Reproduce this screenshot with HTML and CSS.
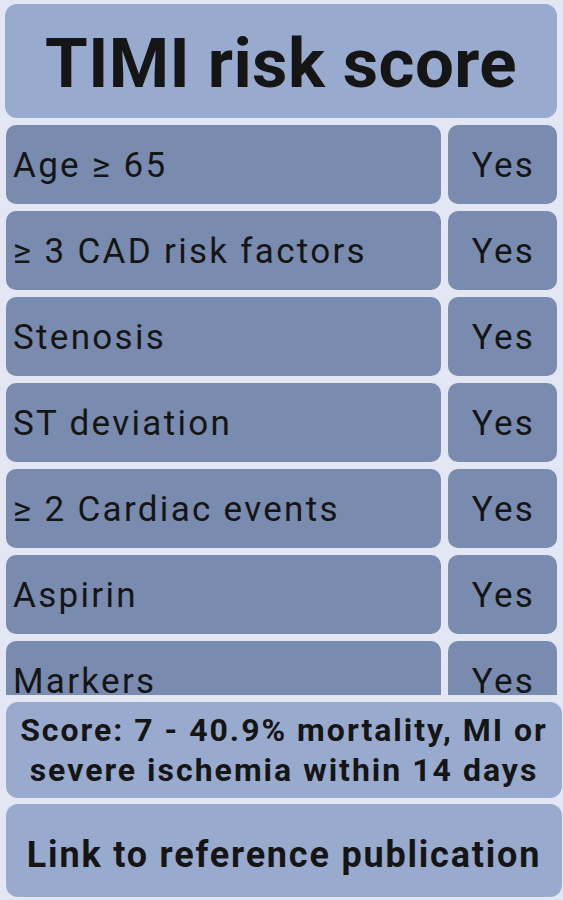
FILE: index.html
```html
<!DOCTYPE html>
<html>
<head>
<meta charset="utf-8">
<link rel="stylesheet" href="styles.css">
</head>
<body>
<div class="app">
  <div class="title">TIMI risk score</div>
  <div class="list">
    <div class="row"><div class="label">Age ≥ 65</div><div class="value">Yes</div></div>
    <div class="row"><div class="label">≥ 3 CAD risk factors</div><div class="value">Yes</div></div>
    <div class="row"><div class="label">Stenosis</div><div class="value">Yes</div></div>
    <div class="row"><div class="label">ST deviation</div><div class="value">Yes</div></div>
    <div class="row"><div class="label">≥ 2 Cardiac events</div><div class="value">Yes</div></div>
    <div class="row"><div class="label">Aspirin</div><div class="value">Yes</div></div>
    <div class="row"><div class="label">Markers</div><div class="value">Yes</div></div>
  </div>
  <div class="score">Score: 7 - 40.9% mortality, MI or<br>severe ischemia within 14 days</div>
  <div class="link">Link to reference publication</div>
</div>
</body>
</html>
```
FILE: styles.css
```css
html, body {
  margin: 0;
  padding: 0;
  background: #e2e7f3;
}
.app {
  box-sizing: border-box;
  height: 900px;
  padding: 4px 6px 3px 6px;
  display: flex;
  flex-direction: column;
  gap: 7px;
  font-family: Roboto, "Liberation Sans", sans-serif;
  color: #151515;
  overflow: hidden;
}
.title {
  box-sizing: border-box;
  flex: 0 0 114px;
  padding-top: 5px;
  background: #98aacd;
  border-radius: 12px;
  display: flex;
  align-items: center;
  justify-content: center;
  font-weight: 700;
  font-size: 69px;
  letter-spacing: 0.4px;
  margin-left: -1px;
}
.list {
  flex: 0 0 570px;
  overflow: hidden;
  display: flex;
  flex-direction: column;
  gap: 7px;
}
.row {
  flex: 0 0 79px;
  display: grid;
  grid-template-columns: 1fr 109px;
  gap: 7px;
}
.label, .value {
  box-sizing: border-box;
  background: #7a8bb0;
  border-radius: 10px;
  display: flex;
  align-items: center;
  font-size: 35px;
  letter-spacing: 2.3px;
  padding-top: 2px;
}
.label {
  padding-left: 7px;
}
.value {
  justify-content: center;
  padding-left: 2px;
}
.score {
  flex: 0 0 96px;
  margin-right: -5px;
  background: #98aacd;
  border-radius: 12px;
  display: flex;
  align-items: center;
  justify-content: center;
  text-align: center;
  font-weight: 700;
  font-size: 32px;
  letter-spacing: 2px;
  line-height: 40px;
}
.link {
  box-sizing: border-box;
  flex: 0 0 93px;
  padding-top: 8px;
  margin-top: -1px;
  margin-right: -5px;
  background: #98aacd;
  border-radius: 12px;
  display: flex;
  align-items: center;
  justify-content: center;
  font-weight: 700;
  font-size: 36px;
  letter-spacing: 1.8px;
}
```
